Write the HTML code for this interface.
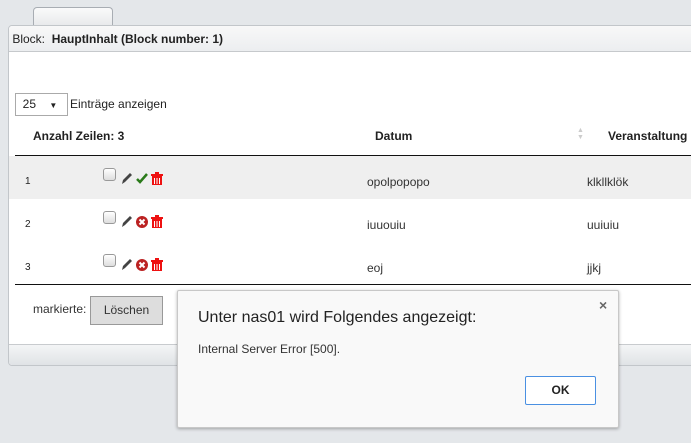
<!DOCTYPE html>
<html><head><meta charset="utf-8"><style>
body{margin:0;width:691px;height:443px;background:#e4e7ea;font-family:"Liberation Sans",Arial,sans-serif;position:relative;overflow:hidden;color:#222}
.a{position:absolute}
.tab{left:33px;top:7px;width:78px;height:19px;border:1px solid #a8adb3;border-bottom:none;border-radius:4px 4px 0 0;background:linear-gradient(#fafafa,#e6e8ea)}
.panel{left:8px;top:25px;width:700px;height:339px;border:1px solid #c2c6ca;border-radius:4px;background:#fff;overflow:hidden}
.hdr{left:0;top:0;width:100%;height:25px;background:linear-gradient(#f8f8f8,#eceef0);border-bottom:1px solid #c6c9cc;font-size:12px;line-height:27px}
.ftr{left:0;top:318px;width:100%;height:21px;background:linear-gradient(#f4f5f6,#dfe2e5);border-top:1px solid #c8cbce}
.t{font-size:12px}
.cb{width:11px;height:11px;border:1px solid #999;border-radius:3px;background:linear-gradient(#fff,#ddd)}
</style></head><body>
<div class="a tab"></div>
<div class="a panel">
 <div class="a hdr">&nbsp;Block:&nbsp; <b>HauptInhalt (Block number: 1)</b></div>
 <div class="a" style="left:0;top:130px;width:100%;height:43px;background:#efefef"></div>
 <div class="a ftr"></div>
</div>
<div class="a" style="left:15px;top:93px;width:51px;height:21px;border:1px solid #aaa;background:#fff;font-size:12px;line-height:21px">&nbsp;&nbsp;25&nbsp;&nbsp;&nbsp;&nbsp;<span style="font-size:8px">▼</span></div>
<div class="a t" style="left:70px;top:97px">Einträge anzeigen</div>
<div class="a t" style="left:33px;top:129px;font-weight:bold">Anzahl Zeilen: 3</div>
<div class="a t" style="left:375px;top:129px;font-weight:bold">Datum</div>
<div class="a" style="left:577px;top:127px;font-size:7px;color:#ccc;line-height:7px">▲<br>▼</div>
<div class="a t" style="left:608px;top:129px;font-weight:bold">Veranstaltung</div>
<div class="a" style="left:15px;top:155px;width:676px;height:1px;background:#111"></div>
<div class="a" style="left:15px;top:284px;width:676px;height:1px;background:#111"></div>

<div class="a" style="left:25px;top:176px;font-size:10px">1</div>
<div class="a" style="left:25px;top:219px;font-size:10px">2</div>
<div class="a" style="left:25px;top:262px;font-size:10px">3</div>
<div class="a cb" style="left:103px;top:168px"></div>
<div class="a cb" style="left:103px;top:211px"></div>
<div class="a cb" style="left:103px;top:254px"></div>

<svg class="a" style="left:120px;top:171px" width="48" height="110">
 <g id="p"><path d="M2 13 L3 9 L10 2 L12 4 L5 11 Z" fill="#444"/></g>
 <use href="#p" y="43"/><use href="#p" y="86"/>
 <path d="M17 8 L20 11 L27 3" stroke="#2a7a1a" stroke-width="2.5" fill="none"/>
 <circle cx="22" cy="51" r="6" fill="#b22"/><path d="M19.5 48.5 L24.5 53.5 M24.5 48.5 L19.5 53.5" stroke="#fff" stroke-width="2"/>
 <circle cx="22" cy="94" r="6" fill="#b22"/><path d="M19.5 91.5 L24.5 96.5 M24.5 91.5 L19.5 96.5" stroke="#fff" stroke-width="2"/>
 <g id="tr" fill="#e11"><rect x="31" y="3" width="12" height="2"/><rect x="35" y="1" width="4" height="2"/><rect x="32" y="5" width="10" height="9"/><rect x="34" y="7" width="1" height="6" fill="#fff"/><rect x="36.5" y="7" width="1" height="6" fill="#fff"/><rect x="39" y="7" width="1" height="6" fill="#fff"/></g>
 <use href="#tr" y="43"/><use href="#tr" y="86"/>
</svg>

<div class="a t" style="left:367px;top:175px;color:#333">opolpopopo</div>
<div class="a t" style="left:587px;top:175px;color:#333">klkllklök</div>
<div class="a t" style="left:367px;top:218px;color:#333">iuuouiu</div>
<div class="a t" style="left:587px;top:218px;color:#333">uuiuiu</div>
<div class="a t" style="left:367px;top:261px;color:#333">eoj</div>
<div class="a t" style="left:587px;top:261px;color:#333">jjkj</div>

<div class="a t" style="left:33px;top:302px;color:#333">markierte:</div>
<div class="a" style="left:90px;top:296px;width:71px;height:27px;border:1px solid #999;background:#ddd;font-size:12px;line-height:26px;text-align:center;color:#333">Löschen</div>

<div class="a" style="left:177px;top:290px;width:440px;height:136px;background:#f9f9f9;border:1px solid #c8c8c8;border-radius:2px;box-shadow:0 1px 3px rgba(0,0,0,.3)">
 <div class="a" style="left:20px;top:18px;font-size:16px;color:#222">Unter nas01 wird Folgendes angezeigt:</div>
 <div class="a" style="left:20px;top:51px;font-size:12px;color:#333">Internal Server Error [500].</div>
 <div class="a" style="left:421px;top:6px;font-size:14px;color:#666;font-weight:bold">×</div>
 <div class="a" style="left:347px;top:85px;width:69px;height:27px;border:1px solid #4a90e2;border-radius:2px;background:#fff;font-size:12px;font-weight:bold;line-height:27px;text-align:center">OK</div>
</div>
</body></html>
